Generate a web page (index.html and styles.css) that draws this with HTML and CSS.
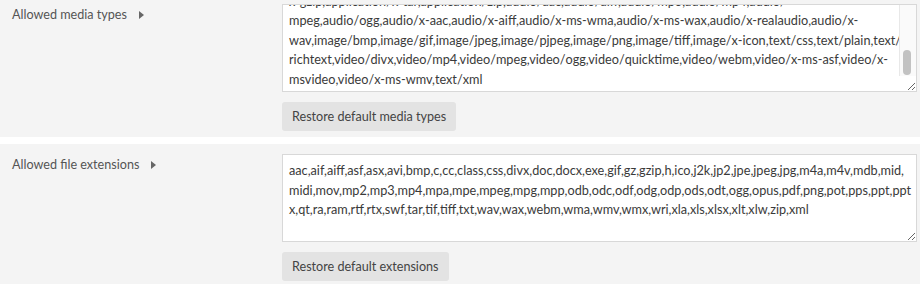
FILE: index.html
```html
<!DOCTYPE html>
<html lang="en">
<head>
    <meta charset="UTF-8">
    <meta name="viewport" content="width=device-width, initial-scale=1.0">
    <title>Media settings</title>
    <link rel="stylesheet" href="styles.css">
</head>
<body>
    <div class="settings">
        <div class="setting first-setting">
            <div class="setting-label">
                <span>Allowed media types</span>
                <span class="arrow"></span>
            </div>
            <div class="setting-field">
                <div class="textarea-wrap">
                    <div class="setting-input media-input" id="media-types" role="textbox" aria-multiline="true">
                        <span class="line">application/<wbr>vnd.ms-excel,application/<wbr>vnd.ms-powerpoint,application/</span>
                        <span class="line">x-gzip,application/<wbr>x-tar,application/<wbr>zip,audio/<wbr>aac,audio/<wbr>aiff,audio/<wbr>mp3,audio/<wbr>mp4,audio/</span>
                        <span class="line">mpeg,audio/<wbr>ogg,audio/<wbr>x-aac,audio/<wbr>x-aiff,audio/<wbr>x-ms-wma,audio/<wbr>x-ms-wax,audio/<wbr>x-realaudio,audio/<wbr>x-</span>
                        <span class="line">wav,image/<wbr>bmp,image/<wbr>gif,image/<wbr>jpeg,image/<wbr>pjpeg,image/<wbr>png,image/<wbr>tiff,image/<wbr>x-icon,text/<wbr>css,text/<wbr>plain,text/</span>
                        <span class="line">richtext,video/<wbr>divx,video/<wbr>mp4,video/<wbr>mpeg,video/<wbr>ogg,video/<wbr>quicktime,video/<wbr>webm,video/<wbr>x-ms-asf,video/<wbr>x-</span>
                        <span class="line">msvideo,video/<wbr>x-ms-wmv,text/<wbr>xml</span>
                    </div>
                    <div class="scroll-track">
                        <span class="scroll-thumb"></span>
                    </div>
                </div>
                <button class="restore-button">Restore default media types</button>
            </div>
        </div>

        <div class="setting">
            <div class="setting-label">
                <span>Allowed file extensions</span>
                <span class="arrow"></span>
            </div>
            <div class="setting-field">
                <div class="textarea-wrap">
                    <div class="setting-input" id="file-extensions" role="textbox" aria-multiline="true">
                        <span class="line">aac,aif,aiff,asf,asx,avi,bmp,c,cc,class,css,divx,doc,docx,exe,gif,gz,gzip,h,ico,j2k,jp2,jpe,jpeg,jpg,m4a,m4v,mdb,mid,</span>
                        <span class="line">midi,mov,mp2,mp3,mp4,mpa,mpe,mpeg,mpg,mpp,odb,odc,odf,odg,odp,ods,odt,ogg,opus,pdf,png,pot,pps,ppt,ppt</span>
                        <span class="line">x,qt,ra,ram,rtf,rtx,swf,tar,tif,tiff,txt,wav,wax,webm,wma,wmv,wmx,wri,xla,xls,xlsx,xlt,xlw,zip,xml</span>
                    </div>
                </div>
                <button class="restore-button">Restore default extensions</button>
            </div>
        </div>
    </div>

    <script>
        // Media list is shown scrolled to its end
        const media = document.getElementById('media-types');
        media.scrollTop = media.scrollHeight;
    </script>
</body>
</html>
```

FILE: styles.css
```css
body {
    font-family: Lato, "Open Sans", sans-serif;
    font-size: 12.6px;
    color: #333;
    background: #fff;
    margin: 0;
}

.settings {
    display: flex;
    flex-direction: column;
    gap: 7px;
}

.setting {
    display: flex;
    background: #f4f4f4;
    padding: 10px 3px 6px 12px;
}

.first-setting {
    padding-top: 4px;
}

.setting-label {
    width: 270px;
    flex: none;
    display: flex;
    align-items: center;
    align-self: flex-start;
    gap: 12px;
    color: #555;
    line-height: 22px;
}

.arrow {
    width: 0;
    height: 0;
    border-top: 4px solid transparent;
    border-bottom: 4px solid transparent;
    border-left: 5px solid #666;
}

.setting-field {
    flex: 1;
    display: flex;
    flex-direction: column;
    align-items: flex-start;
    gap: 10px;
}

.textarea-wrap {
    position: relative;
    width: 100%;
}

.setting-input {
    box-sizing: border-box;
    width: 100%;
    height: 88px;
    font-size: 12.7px;
    line-height: 19.5px;
    color: #3a3a3a;
    background: #fff;
    border: 1px solid #d8d8d8;
    padding: 6px 4px 2px 6px;
    white-space: nowrap;
    resize: vertical;
    overflow: hidden;
}

.line {
    display: block;
}

.media-input {
    padding-right: 8px;
}

.scroll-track {
    position: absolute;
    top: 1px;
    right: 1px;
    width: 16px;
    height: 71px;
    background: #fafafa;
    border-left: 1px solid #e8e8e8;
}

.scroll-thumb {
    position: absolute;
    left: 3px;
    top: 45px;
    width: 8px;
    height: 25px;
    border-radius: 4px;
    background: #c2c2c2;
}

.restore-button {
    font-family: inherit;
    font-size: 12.6px;
    color: #444;
    background: #e3e3e3;
    border: none;
    border-radius: 3px;
    padding: 0 10px;
    height: 29px;
}
```
